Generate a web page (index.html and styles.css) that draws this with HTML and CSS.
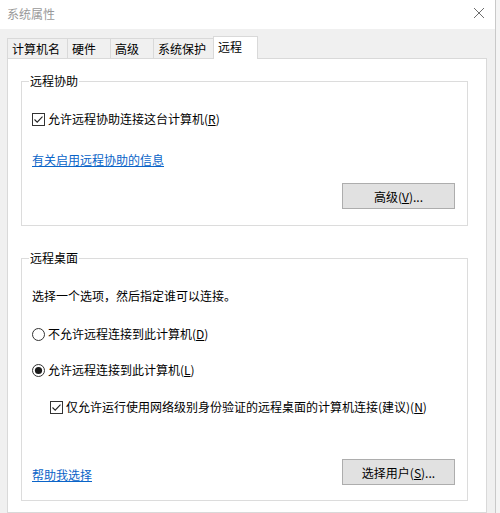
FILE: index.html
```html
<!DOCTYPE html>
<html lang="zh-CN">
<head>
<meta charset="utf-8">
<title>系统属性</title>
<link rel="stylesheet" href="styles.css">
</head>
<body>
<div class="window">
  <div class="titlebar">
    <span class="title">系统属性</span>
    <svg class="close" width="12" height="12" viewBox="0 0 12 12"><path d="M1 1 L11 11 M11 1 L1 11" stroke="#6e6e6e" stroke-width="1" fill="none"/></svg>
  </div>
  <div class="body">
    <div class="tabs">
      <div class="tab w61">计算机名</div>
      <div class="tab w44">硬件</div>
      <div class="tab w44">高级</div>
      <div class="tab w61">系统保护</div>
      <div class="tab active">远程</div>
    </div>
    <div class="panel">
      <div class="group g1">
        <div class="legend">远程协助</div>
        <div class="row r-chk1">
          <svg class="ctl" width="13" height="13" viewBox="0 0 13 13"><rect x="0.5" y="0.5" width="12" height="12" fill="#fff" stroke="#333"/><path d="M2.5 6.5 L5.2 9.2 L10.5 3.6" stroke="#222" stroke-width="1.1" fill="none"/></svg>
          <span>允许远程协助连接这台计算机(<u>R</u>)</span>
        </div>
        <div class="row r-link1"><a class="link">有关启用远程协助的信息</a></div>
        <div class="btn-row b1"><button class="btn">高级(<u>V</u>)...</button></div>
      </div>
      <div class="group g2">
        <div class="legend">远程桌面</div>
        <div class="row r-text">选择一个选项，然后指定谁可以连接。</div>
        <div class="row r-rad1">
          <svg class="ctl" width="13" height="13" viewBox="0 0 13 13"><circle cx="6.5" cy="6.5" r="6" fill="#fff" stroke="#333"/></svg>
          <span>不允许远程连接到此计算机(<u>D</u>)</span>
        </div>
        <div class="row r-rad2">
          <svg class="ctl" width="13" height="13" viewBox="0 0 13 13"><circle cx="6.5" cy="6.5" r="6" fill="#fff" stroke="#333"/><circle cx="6.5" cy="6.5" r="3.6" fill="#1a1a1a"/></svg>
          <span>允许远程连接到此计算机(<u>L</u>)</span>
        </div>
        <div class="row r-chk2">
          <svg class="ctl" width="13" height="13" viewBox="0 0 13 13"><rect x="0.5" y="0.5" width="12" height="12" fill="#fff" stroke="#333"/><path d="M2.5 6.5 L5.2 9.2 L10.5 3.6" stroke="#222" stroke-width="1.1" fill="none"/></svg>
          <span>仅允许运行使用网络级别身份验证的远程桌面的计算机连接(建议)(<u>N</u>)</span>
        </div>
        <div class="bottom-row">
          <a class="link help">帮助我选择</a>
          <button class="btn">选择用户(<u>S</u>)...</button>
        </div>
      </div>
    </div>
  </div>
</div>
</body>
</html>
```

FILE: styles.css
```css
html, body {
  margin: 0;
  padding: 0;
}
body {
  background: #f4f4f4;
  font-family: "Noto Sans CJK SC", "Noto Sans", sans-serif;
  font-size: 12px;
  color: #000;
  width: 500px;
  height: 513px;
  overflow: hidden;
}
.window {
  width: 495px;
  height: 513px;
  border-right: 1px solid #c9c9c9;
  background: #f0f0f0;
  display: flex;
  flex-direction: column;
}
.titlebar {
  height: 29px;
  flex: none;
  background: #fff;
  display: flex;
  justify-content: space-between;
  align-items: center;
  padding: 0 10px 0 7px;
}
.title {
  color: #999;
  line-height: 16px;
  margin-top: -2px;
}
.close {
  align-self: flex-start;
  margin-top: 7px;
}
.body {
  flex: 1;
  padding: 7px 8px 0 7px;
  display: flex;
  flex-direction: column;
}
.tabs {
  display: flex;
  align-items: flex-end;
  height: 22px;
  flex: none;
}
.tab {
  box-sizing: border-box;
  height: 20px;
  border: 1px solid #d9d9d9;
  border-bottom: none;
  background: #f0f0f0;
  padding-left: 4px;
  line-height: 19px;
  margin-right: -1px;
}
.w61 { width: 61px; }
.w44 { width: 44px; }
.tab.active {
  width: 45px;
  height: 23px;
  background: #fff;
  margin-bottom: -1px;
  position: relative;
  z-index: 1;
  line-height: 20px;
}
.panel {
  flex: 1;
  background: #fff;
  border: 1px solid #d9d9d9;
  padding: 22px 0 0 13px;
}
.group {
  box-sizing: border-box;
  width: 447px;
  border: 1px solid #dcdcdc;
  padding-left: 10px;
}
.legend {
  width: fit-content;
  background: #fff;
  line-height: 16px;
  margin: -9px 0 0 -3px;
  padding: 0 1px;
}
.row {
  display: flex;
  align-items: center;
  line-height: 16px;
  height: 16px;
  white-space: nowrap;
}
.ctl {
  flex: none;
  margin-right: 3px;
}
.r-chk1 { margin-top: 22px; }
.r-link1 { margin-top: 25px; }
.link {
  color: #0a64c8;
  text-decoration: underline;
  line-height: 16px;
}
.btn-row {
  display: flex;
  justify-content: flex-end;
  padding-right: 12px;
}
.b1 {
  margin-top: 15px;
  padding-bottom: 16px;
}
.btn {
  box-sizing: border-box;
  width: 113px;
  height: 26px;
  background: #e1e1e1;
  border: 1px solid #adadad;
  font-family: inherit;
  font-size: 12px;
  color: #000;
  padding: 0;
  margin: 0;
}
.g2 {
  margin-top: 32px;
}
.r-text { margin-top: 22px; }
.r-rad1 { margin-top: 22px; }
.r-rad2 { margin-top: 20px; }
.r-chk2 {
  margin-top: 21px;
  padding-left: 18px;
}
.bottom-row {
  display: flex;
  justify-content: space-between;
  align-items: flex-start;
  margin-top: 44px;
  padding: 0 12px 15px 0;
}
.help {
  margin-top: 8px;
}
```
